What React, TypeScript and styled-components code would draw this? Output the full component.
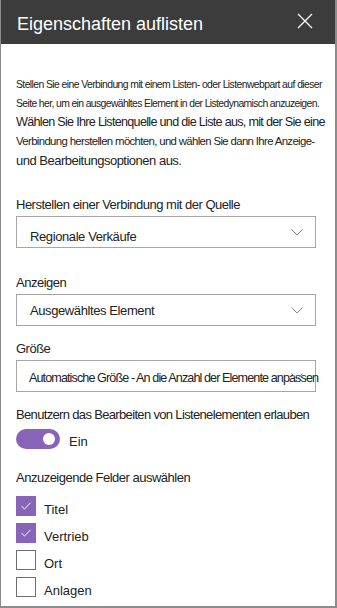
import styled, { createGlobalStyle } from "styled-components";

const GlobalStyle = createGlobalStyle`
  html, body {
    margin: 0;
    padding: 0;
    background: #ffffff;
  }
  body {
    font-family: "Liberation Sans", Arial, sans-serif;
    color: #222222;
  }
`;

const fields = [
  { name: "Titel", checked: true },
  { name: "Vertrieb", checked: true },
  { name: "Ort", checked: false },
  { name: "Anlagen", checked: false },
];

export default function App() {
  return (
    <>
      <GlobalStyle />
      <Panel>
        <Header>
          <Title>Eigenschaften auflisten</Title>
          <CloseBtn aria-label="Schließen">
            <svg width="16" height="16" viewBox="0 0 16 16">
              <path d="M1 1 L15 15 M15 1 L1 15" stroke="#ffffff" strokeWidth="1.3" fill="none" />
            </svg>
          </CloseBtn>
        </Header>
        <Body>
          <Desc>
            <DescLine $size={10.4} $track={-0.58}>
              Stellen Sie eine Verbindung mit einem Listen- oder Listenwebpart auf dieser
            </DescLine>
            <DescLine $size={10.4} $track={-0.62}>
              Seite her, um ein ausgewähltes Element in der Listedynamisch anzuzeigen.
            </DescLine>
            <DescLine $size={12.6} $track={-0.7}>
              Wählen Sie Ihre Listenquelle und die Liste aus, mit der Sie eine
            </DescLine>
            <DescLine $size={11.4} $track={-0.65}>
              Verbindung herstellen möchten, und wählen Sie dann Ihre Anzeige-
            </DescLine>
            <DescLine $size={13} $track={-0.5}>
              und Bearbeitungsoptionen aus.
            </DescLine>
          </Desc>

          <Field $top={26}>
            <Label>Herstellen einer Verbindung mit der Quelle</Label>
            <Dropdown $pad={8}>
              <DropText>Regionale Verkäufe</DropText>
              <Chevron />
            </Dropdown>
          </Field>

          <Field $top={26}>
            <Label>Anzeigen</Label>
            <Dropdown>
              <DropText>Ausgewähltes Element</DropText>
              <Chevron />
            </Dropdown>
          </Field>

          <Field $top={14}>
            <Label>Größe</Label>
            <Dropdown $pad={4} $tight>
              <DropText $size={12.6} $track={-0.9}>
                Automatische Größe - An die Anzahl der Elemente anpassen
              </DropText>
              <Chevron />
            </Dropdown>
          </Field>

          <Field $top={14}>
            <Label $track={-0.66}>Benutzern das Bearbeiten von Listenelementen erlauben</Label>
            <ToggleRow>
              <Toggle>
                <Knob />
              </Toggle>
              <ToggleText>Ein</ToggleText>
            </ToggleRow>
          </Field>

          <Field $top={20}>
            <Label>Anzuzeigende Felder auswählen</Label>
            <CheckList>
              {fields.map((f) => (
                <CheckRow key={f.name}>
                  <Box $checked={f.checked}>
                    {f.checked && (
                      <svg width="12" height="10" viewBox="0 0 12 10">
                        <path d="M1.5 5.2 L4.5 8 L10.5 1.8" stroke="#ffffff" strokeWidth="1" fill="none" />
                      </svg>
                    )}
                  </Box>
                  <CheckText>{f.name}</CheckText>
                </CheckRow>
              ))}
            </CheckList>
          </Field>
        </Body>
      </Panel>
    </>
  );
}

function Chevron() {
  return (
    <ChevronIcon width="12" height="7" viewBox="0 0 12 7">
      <path d="M0.5 0.5 L6 6 L11.5 0.5" stroke="#8a8a8a" strokeWidth="1" fill="none" />
    </ChevronIcon>
  );
}

const Panel = styled.div`
  box-sizing: border-box;
  width: 337px;
  height: 608px;
  border: 2px solid #8c8c8c;
  border-left-width: 1px;
  border-top: none;
  display: flex;
  flex-direction: column;
  overflow: hidden;
`;

const Header = styled.div`
  height: 44px;
  background: #3c3c3c;
  display: flex;
  align-items: center;
  justify-content: space-between;
  padding: 0 22px 0 16px;
  flex-shrink: 0;
`;

const Title = styled.div`
  color: #ffffff;
  font-size: 18px;
  padding-top: 5px;
`;

const CloseBtn = styled.div`
  display: flex;
  width: 16px;
  height: 16px;
  padding-bottom: 3px;
`;

const Body = styled.div`
  padding: 0 19px 0 15px;
  display: flex;
  flex-direction: column;
`;

const Desc = styled.div`
  margin-top: 31px;
  display: flex;
  flex-direction: column;
`;

const DescLine = styled.div<{ $size: number; $track: number }>`
  font-size: ${(p) => p.$size}px;
  letter-spacing: ${(p) => p.$track}px;
  line-height: 19px;
  white-space: nowrap;
  color: #222222;
`;

const Field = styled.div<{ $top: number }>`
  margin-top: ${(p) => p.$top}px;
  display: flex;
  flex-direction: column;
`;

const Label = styled.div<{ $track?: number }>`
  font-size: 13px;
  letter-spacing: ${(p) => p.$track ?? -0.5}px;
  line-height: 18px;
  color: #222222;
  white-space: nowrap;
`;

const Dropdown = styled.div<{ $pad?: number; $tight?: boolean }>`
  position: relative;
  box-sizing: border-box;
  margin-top: 2px;
  height: 32px;
  border: 1px solid #a6a6a6;
  display: flex;
  align-items: center;
  padding: ${(p) => p.$pad ?? 0}px 0 0 ${(p) => (p.$tight ? 12 : 13)}px;
`;

const DropText = styled.div<{ $size?: number; $track?: number }>`
  font-size: ${(p) => p.$size ?? 13}px;
  letter-spacing: ${(p) => p.$track ?? -0.4}px;
  white-space: nowrap;
  color: #222222;
`;

const ChevronIcon = styled.svg`
  position: absolute;
  right: 12px;
  top: 12px;
`;

const ToggleRow = styled.div`
  margin-top: 5px;
  display: flex;
  align-items: center;
  gap: 9px;
`;

const Toggle = styled.div`
  box-sizing: border-box;
  width: 44px;
  height: 20px;
  border-radius: 10px;
  background: #8764b8;
  display: flex;
  align-items: center;
  justify-content: flex-end;
  padding-right: 5px;
`;

const Knob = styled.div`
  width: 12px;
  height: 12px;
  border-radius: 50%;
  background: #ffffff;
`;

const ToggleText = styled.div`
  font-size: 13px;
  color: #222222;
  padding-top: 4px;
`;

const CheckList = styled.div`
  margin-top: 8px;
  display: flex;
  flex-direction: column;
  gap: 5px;
`;

const CheckRow = styled.div`
  display: flex;
  align-items: center;
  gap: 8px;
`;

const Box = styled.div<{ $checked: boolean }>`
  box-sizing: border-box;
  width: 20px;
  height: 20px;
  border: ${(p) => (p.$checked ? "none" : "1px solid #6e6e6e")};
  background: ${(p) => (p.$checked ? "#8764b8" : "#ffffff")};
  display: flex;
  align-items: center;
  justify-content: center;
`;

const CheckText = styled.div`
  font-size: 13px;
  color: #222222;
  padding-top: 7px;
`;
